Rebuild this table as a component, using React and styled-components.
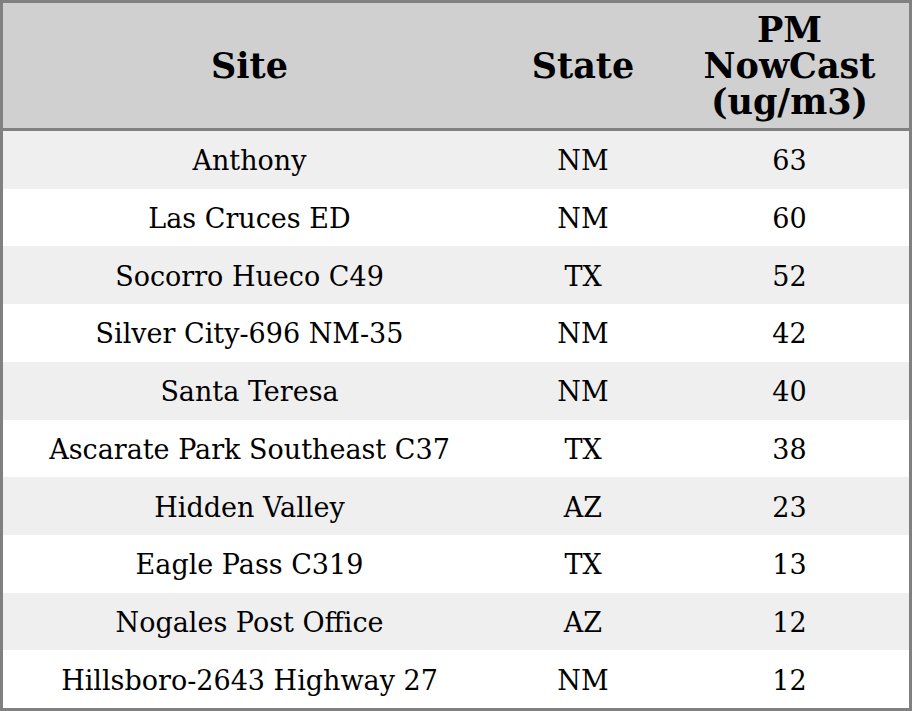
import React from 'react';
import styled, { createGlobalStyle } from 'styled-components';

const rows = [
  ['Anthony', 'NM', 63],
  ['Las Cruces ED', 'NM', 60],
  ['Socorro Hueco C49', 'TX', 52],
  ['Silver City-696 NM-35', 'NM', 42],
  ['Santa Teresa', 'NM', 40],
  ['Ascarate Park Southeast C37', 'TX', 38],
  ['Hidden Valley', 'AZ', 23],
  ['Eagle Pass C319', 'TX', 13],
  ['Nogales Post Office', 'AZ', 12],
  ['Hillsboro-2643 Highway 27', 'NM', 12],
];

export default function App() {
  return (
    <>
      <GlobalStyle />
      <Table>
        <Header>
          <HeadCell>Site</HeadCell>
          <HeadCell>State</HeadCell>
          <HeadCell>PM<br />NowCast<br />(ug/m3)</HeadCell>
        </Header>
        {rows.map(([site, state, pm], i) => (
          <Row key={site} $striped={i % 2 === 0}>
            <Cell>{site}</Cell>
            <Cell>{state}</Cell>
            <Cell>{pm}</Cell>
          </Row>
        ))}
      </Table>
    </>
  );
}

const GlobalStyle = createGlobalStyle`
  html, body {
    margin: 0;
    padding: 0;
    background: #ffffff;
  }
  body {
    font-family: "DejaVu Serif", "Liberation Serif", serif;
  }
`;

const Table = styled.div`
  box-sizing: border-box;
  width: 912px;
  height: 711px;
  border: 3px solid #808080;
  display: flex;
  flex-direction: column;
`;

const Header = styled.div`
  display: grid;
  grid-template-columns: 493px 174px 1fr;
  height: 125px;
  flex: none;
  background: #d0d0d0;
  border-bottom: 3px solid #808080;
`;

const HeadCell = styled.div`
  display: flex;
  align-items: center;
  justify-content: center;
  text-align: center;
  font-size: 35px;
  line-height: 36px;
  font-weight: bold;
  color: #000;
`;

const Row = styled.div`
  flex: 1;
  display: grid;
  grid-template-columns: 493px 174px 1fr;
  background: ${p => (p.$striped ? '#efefef' : '#ffffff')};
`;

const Cell = styled.div`
  display: flex;
  align-items: center;
  justify-content: center;
  padding-top: 2px;
  font-size: 27px;
  color: #000;
`;
